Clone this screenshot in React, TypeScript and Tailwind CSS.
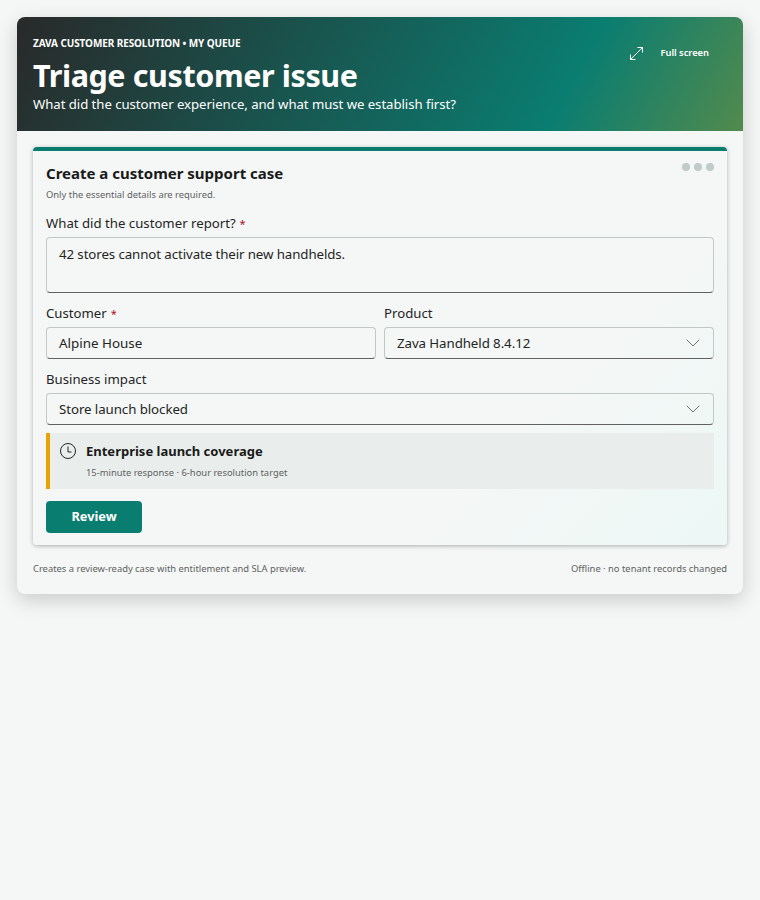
import { ChevronDown } from "lucide-react";

const font = { fontFamily: '"Noto Sans", sans-serif' };

function Label({ text, required }: { readonly text: string; readonly required?: boolean }) {
  return (
    <div className="h-5 text-[13.2px] leading-5 text-[#242424]">
      {text}
      {required && <span className="pl-[1px] text-[11px] text-[#b10e1c]"> *</span>}
    </div>
  );
}

function SelectBox({ value }: { readonly value: string }) {
  return (
    <div className="mt-1 flex h-8 items-center justify-between rounded border border-[#c0c9c6] border-b-[#616161] pl-3 pr-2 text-[13.3px] tracking-[-0.08px] text-[#242424]">
      <span className="pt-[1px]">{value}</span>
      <ChevronDown className="h-6 w-6 text-[#707070]" strokeWidth={1} />
    </div>
  );
}

function TextBox({ value }: { readonly value: string }) {
  return (
    <div className="mt-1 flex h-8 items-center rounded border border-[#c0c9c6] border-b-[#616161] px-3 text-[13.4px] text-[#242424]">
      {value}
    </div>
  );
}

export default function App() {
  return (
    <div className="min-h-[900px] bg-[#f4f7f6] p-[17px]" style={font}>
      <div className="overflow-hidden rounded-lg bg-[#f4f7f6] shadow-[0_6px_20px_rgba(0,0,0,0.18)]">
        <header className="flex h-[114px] items-start justify-between bg-[linear-gradient(118deg,#292929_0%,#0a7d71_75%,#528a4d_100%)] pl-4 pr-[34px] text-white">
          <div>
            <div className="mt-[19px] text-[10px] font-bold leading-[14px] tracking-[-0.1px]">ZAVA CUSTOMER RESOLUTION • MY QUEUE</div>
            <h1 className="mt-[7px] text-[30.5px] font-bold leading-[37px] tracking-[-0.4px]">Triage customer issue</h1>
            <p className="text-[13.2px] leading-[20px] tracking-[-0.05px]">What did the customer experience, and what must we establish first?</p>
          </div>
          <div className="ml-auto mt-[29px] flex items-center gap-[17px]">
            <svg width="13" height="13" viewBox="0 0 13 13" fill="none" stroke="currentColor" strokeWidth="1">
              <path d="M0.500 12.500 12.500 0.500M7.500 0.500h5v5M0.500 7.500v5h5" />
            </svg>
            <span className="text-[9.3px] font-semibold leading-[14px]">Full screen</span>
          </div>
        </header>

        <div className="px-4 pt-[16px] pb-[18px]">
          <section className="relative rounded border-t-4 border-[#0a7d71] bg-[linear-gradient(135deg,#f4f7f6_70%,#ecf8f5_100%)] px-[13px] pt-[12px] pb-[12px] shadow-[0_1px_4px_rgba(0,0,0,0.3)]">
            <div className="absolute right-[13px] top-[12px] flex gap-1">
              <span className="h-2 w-2 rounded-full bg-[#bfcbc8]" />
              <span className="h-2 w-2 rounded-full bg-[#bfcbc8]" />
              <span className="h-2 w-2 rounded-full bg-[#bfcbc8]" />
            </div>
            <h2 className="text-[15px] font-bold leading-5 text-[#1a1a1a]">Create a customer support case</h2>
            <p className="mt-[5px] text-[9.4px] leading-[14px] text-[#616161]">Only the essential details are required.</p>

            <div className="mt-[11px]">
              <Label text="What did the customer report?" required />
              <div className="mt-1 h-[56px] rounded border border-[#c0c9c6] border-b-[#616161] px-3 py-[6px] text-[13.3px] leading-5 tracking-[-0.1px] text-[#242424]">
                42 stores cannot activate their new handhelds.
              </div>
            </div>

            <div className="mt-[10px] grid grid-cols-2 gap-2">
              <div>
                <Label text="Customer" required />
                <TextBox value="Alpine House" />
              </div>
              <div>
                <Label text="Product" />
                <SelectBox value="Zava Handheld 8.4.12" />
              </div>
            </div>

            <div className="mt-[10px]">
              <Label text="Business impact" />
              <SelectBox value="Store launch blocked" />
            </div>

            <div className="mt-2 flex h-14 gap-[10px] border-l-4 border-[#eaa300] bg-[#e9eeec] pl-[10px] pt-[9px]">
              <svg className="mt-[1px]" width="16" height="16" viewBox="0 0 16 16" fill="none" stroke="#242424" strokeWidth="1">
                <circle cx="8" cy="8" r="7.500" />
                <path d="M8 3.500V9h3.500" />
              </svg>
              <div>
                <div className="text-[13px] font-bold leading-[18px] text-[#1a1a1a]">Enterprise launch coverage</div>
                <div className="mt-[6px] text-[9.4px] leading-[14px] text-[#616161]">15-minute response · 6-hour resolution target</div>
              </div>
            </div>

            <button className="mt-3 block h-8 w-24 rounded bg-[#0a7d71] text-[12.8px] font-bold text-white">Review</button>
          </section>

          <footer className="mt-[17px] flex justify-between text-[9.4px] leading-[14px] text-[#616161]">
            <span>Creates a review-ready case with entitlement and SLA preview.</span>
            <span>Offline · no tenant records changed</span>
          </footer>
        </div>
      </div>
    </div>
  );
}
